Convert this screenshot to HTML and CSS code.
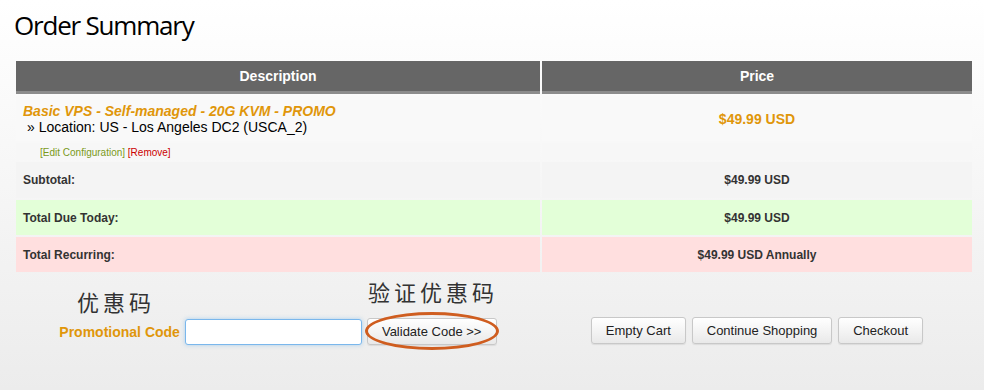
FILE: index.html
```html
<!DOCTYPE html>
<html lang="en">
<head>
  <meta charset="UTF-8">
  <meta name="viewport" content="width=device-width, initial-scale=1.0">
  <title>Order Summary</title>
  <link rel="stylesheet" href="styles.css">
</head>
<body>
  <h1 class="page-title">Order Summary</h1>
  <table class="cart">
    <thead>
      <tr>
        <th class="col-desc">Description</th>
        <th class="col-price">Price</th>
      </tr>
    </thead>
    <tbody>
      <tr class="item">
        <td>
          <div class="product-name">Basic VPS - Self-managed - 20G KVM - PROMO</div>
          <div class="product-option">&raquo; Location: US - Los Angeles DC2 (USCA_2)</div>
        </td>
        <td class="price">$49.99 USD</td>
      </tr>
      <tr class="item-actions">
        <td><a href="#" class="edit-link">[Edit Configuration]</a> <a href="#" class="remove-link">[Remove]</a></td>
        <td></td>
      </tr>
      <tr class="total subtotal">
        <td>Subtotal:</td>
        <td class="amount">$49.99 USD</td>
      </tr>
      <tr class="total due-today">
        <td>Total Due Today:</td>
        <td class="amount">$49.99 USD</td>
      </tr>
      <tr class="total recurring">
        <td>Total Recurring:</td>
        <td class="amount">$49.99 USD Annually</td>
      </tr>
    </tbody>
  </table>

  <table class="cart-footer">
    <tr>
      <td class="col-desc promo-cell">
        <span class="note note-promo">优惠码</span>
        <span class="note note-validate">验证优惠码</span>
        <form class="promo-form">
          <label class="promo-label" for="promocode">Promotional Code</label>
          <input type="text" id="promocode" class="promo-input">
          <span class="validate-wrap">
            <button type="button" class="btn">Validate Code &gt;&gt;</button>
            <span class="ring"></span>
          </span>
        </form>
      </td>
      <td class="col-price">
        <div class="cart-actions">
          <button type="button" class="btn">Empty Cart</button>
          <button type="button" class="btn">Continue Shopping</button>
          <button type="button" class="btn">Checkout</button>
        </div>
      </td>
    </tr>
  </table>
</body>
</html>
```

FILE: styles.css
```css
html {
  background: linear-gradient(#ffffff, #ececec) no-repeat;
  min-height: 100%;
}

body {
  margin: 0;
  padding: 0 12px 0 14px;
  font-family: "Liberation Sans", Arial, sans-serif;
  font-size: 14px;
  color: #000;
}

.page-title {
  margin: 0;
  padding-top: 8px;
  height: 51px;
  font-family: "Open Sans", sans-serif;
  font-weight: 400;
  font-size: 26px;
  letter-spacing: -1.2px;
  line-height: 34px;
  color: #000;
}

.cart {
  width: 960px;
  border-collapse: separate;
  border-spacing: 2px;
}

.col-desc {
  width: 524px;
}

.cart th {
  height: 30px;
  padding: 0;
  background: #666;
  border-bottom: 3px solid #8c8c8c;
  color: #fff;
  font-size: 14px;
  font-weight: bold;
  text-align: center;
}

.cart td {
  padding: 0;
}

.item td {
  height: 45px;
  background: #f9f9f9;
}

.item td:first-child {
  padding-left: 7px;
}

.product-name {
  color: #e0960a;
  font-weight: bold;
  font-style: italic;
  line-height: 16px;
}

.product-option {
  padding-left: 4px;
  line-height: 16px;
}

.price {
  text-align: center;
  color: #e0960a;
  font-weight: bold;
  padding-top: 3px;
}

.item-actions td {
  height: 17px;
  background: #f7f7f7;
  font-size: 10px;
  line-height: 14px;
}

.item-actions td:first-child {
  padding-left: 24px;
  padding-top: 3px;
  height: 14px;
}

.edit-link {
  color: #7a9a1a;
  text-decoration: none;
}

.remove-link {
  color: #cc0000;
  text-decoration: none;
}

.total td {
  height: 35px;
  font-size: 12px;
  font-weight: bold;
  color: #333;
}

.total td:first-child {
  padding-left: 7px;
}

.total .amount {
  text-align: center;
}

.subtotal td {
  height: 36px;
  background: #f4f4f4;
}

.due-today td {
  background: #e3ffd8;
}

.recurring td {
  background: #ffdfdf;
}

.cart-footer {
  width: 960px;
  border-collapse: separate;
  border-spacing: 2px;
}

.cart-footer td {
  padding: 0;
  text-align: center;
  vertical-align: top;
  height: 80px;
}

.promo-cell {
  position: relative;
}

.promo-form {
  padding-top: 42px;
}

.cart-actions {
  padding-top: 41px;
}

.promo-label {
  color: #e0960a;
  font-weight: bold;
  font-size: 14px;
  vertical-align: middle;
}

.promo-input {
  width: 173px;
  height: 22px;
  margin: 0 0 0 1px;
  padding: 1px;
  border: 1px solid #7ab7ec;
  border-radius: 3px;
  box-shadow: 0 0 4px rgba(102, 175, 233, 0.5);
  background: #fff;
  vertical-align: middle;
}

.btn {
  height: 27px;
  padding: 0 14px;
  font-family: "Liberation Sans", Arial, sans-serif;
  font-size: 13px;
  color: #222;
  background: linear-gradient(#ffffff, #e9e9e9);
  border: 1px solid #c8c8c8;
  border-radius: 3px;
  box-shadow: 0 1px 1px rgba(0, 0, 0, 0.08);
  vertical-align: middle;
}

.validate-wrap {
  position: relative;
  display: inline-block;
  margin-left: 1px;
  vertical-align: middle;
}

.validate-wrap .btn {
  width: 130px;
  padding: 0;
}

.ring {
  position: absolute;
  left: -2px;
  top: -6px;
  width: 128px;
  height: 32px;
  border: 3px solid #cf5d1f;
  border-radius: 50%;
}

.cart-actions .btn {
  margin: 0 1px;
}

.note {
  position: absolute;
  font-family: "Noto Sans CJK SC", sans-serif;
  font-size: 22px;
  letter-spacing: 4px;
  color: #333;
  line-height: 24px;
}

.note-promo {
  left: 61px;
  top: 13px;
}

.note-validate {
  left: 352px;
  top: 3px;
}
```
